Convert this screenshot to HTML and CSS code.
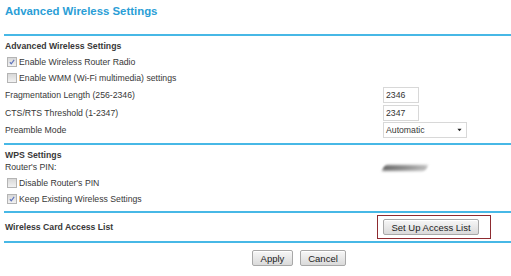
FILE: index.html
```html
<!DOCTYPE html>
<html lang="en">
<head>
  <meta charset="UTF-8">
  <title>Advanced Wireless Settings</title>
  <link rel="stylesheet" href="styles.css">
</head>
<body>

<div class="page">
  <div class="title">Advanced Wireless Settings</div>
  <div class="rule"></div>

  <div class="section general">
    <div class="head">Advanced Wireless Settings</div>
    <div class="check">
      <span class="box"><svg viewBox="0 0 10 10"><path d="M2.3 5.3 L4.1 7.2 L7.7 2.4"/></svg></span>
      Enable Wireless Router Radio
    </div>
    <div class="check">
      <span class="box"></span>
      Enable WMM (Wi-Fi multimedia) settings
    </div>
    <div class="field">
      <span>Fragmentation Length (256-2346)</span>
      <input class="text-input" type="text" value="2346">
    </div>
    <div class="field">
      <span>CTS/RTS Threshold (1-2347)</span>
      <input class="text-input" type="text" value="2347">
    </div>
    <div class="field short">
      <span>Preamble Mode</span>
      <div class="select">
        <span>Automatic</span>
        <svg class="arrow" viewBox="0 0 6 4"><path d="M0.5 0.5 H5.5 L3 3.5 Z"/></svg>
      </div>
    </div>
  </div>
  <div class="rule"></div>

  <div class="section wps">
    <div class="head small">WPS Settings</div>
    <div class="field pin-row">
      <span>Router's PIN:</span>
      <div class="pin-blur"></div>
    </div>
    <div class="check">
      <span class="box"></span>
      Disable Router's PIN
    </div>
    <div class="check">
      <span class="box"><svg viewBox="0 0 10 10"><path d="M2.3 5.3 L4.1 7.2 L7.7 2.4"/></svg></span>
      Keep Existing Wireless Settings
    </div>
  </div>
  <div class="rule"></div>

  <div class="section access">
    <div class="access-row">
      <span class="head">Wireless Card Access List</span>
      <div class="highlight">
        <button class="btn wide">Set Up Access List</button>
      </div>
    </div>
  </div>
  <div class="rule"></div>

  <div class="actions">
    <button class="btn apply">Apply</button>
    <button class="btn cancel">Cancel</button>
  </div>
</div>

</body>
</html>
```

FILE: styles.css
```css
body {
  margin: 0;
  font-family: "Liberation Sans", Arial, sans-serif;
  font-size: 8.7px;
  color: #383838;
  background: #fff;
}
.page {
  padding-left: 4px;
}
.title {
  height: 34px;
  line-height: 23px;
  padding-left: 1px;
  font-size: 11.4px;
  font-weight: bold;
  color: #2a9ed6;
}
.rule {
  height: 2px;
  background: #47b8e6;
}
.section {
  padding-left: 1px;
}
.general {
  padding-top: 2px;
  padding-bottom: 5px;
}
.wps {
  padding-top: 3px;
  padding-bottom: 4px;
}
.access {
  padding-top: 2px;
  padding-bottom: 2px;
}
.head {
  height: 16px;
  line-height: 16px;
  font-weight: bold;
}
.head.small {
  height: 14px;
  line-height: 14px;
}
.check {
  display: flex;
  align-items: center;
  height: 16px;
}
.box {
  width: 10px;
  height: 10px;
  box-sizing: border-box;
  margin: 0 2px 0 2px;
  border: 1px solid #b4b4b4;
  background: linear-gradient(#d8d8d8, #f2f2f2);
}
.box svg {
  display: block;
  width: 8px;
  height: 8px;
}
.box path {
  fill: none;
  stroke: #5f74bd;
  stroke-width: 1.4;
}
.field {
  display: grid;
  grid-template-columns: 378px auto;
  align-items: center;
  height: 18px;
}
.field.short {
  height: 16px;
}
.text-input {
  width: 36px;
  height: 16px;
  box-sizing: border-box;
  margin: 0;
  padding: 0 2px;
  border: 1px solid #d8d8d8;
  font-family: inherit;
  font-size: 8.7px;
  color: #333;
}
.select {
  display: flex;
  align-items: center;
  justify-content: space-between;
  width: 84px;
  height: 16px;
  box-sizing: border-box;
  padding: 0 4px 0 2px;
  border: 1px solid #d8d8d8;
}
.arrow {
  width: 5px;
  height: 4px;
}
.arrow path {
  fill: #222;
}
.pin-row {
  height: 10px;
  margin-bottom: 3px;
}
.pin-blur {
  width: 44px;
  height: 6px;
  margin-top: 1px;
  border-radius: 3px;
  background: linear-gradient(90deg, #6a6a6a, #8e8e8e 50%, #bdbdbd);
  filter: blur(1.3px);
  transform: skewX(-25deg);
}
.access-row {
  display: grid;
  grid-template-columns: 372px auto;
  align-items: center;
  height: 24px;
}
.highlight {
  display: flex;
  align-items: center;
  width: 114px;
  height: 24px;
  box-sizing: border-box;
  padding-left: 5px;
  border: 1px solid #8e2b30;
}
.btn {
  height: 16px;
  padding: 0;
  font-family: inherit;
  font-size: 9.5px;
  color: #222;
  border: 1px solid #a8a8a8;
  border-radius: 2px;
  background: linear-gradient(#f7f7f7, #dadada);
  box-shadow: inset 0 1px #fff;
}
.btn.wide {
  width: 96px;
}
.actions {
  display: flex;
  gap: 7px;
  padding: 7px 0 0 248px;
}
.btn.apply {
  width: 41px;
}
.btn.cancel {
  width: 46px;
}
```
